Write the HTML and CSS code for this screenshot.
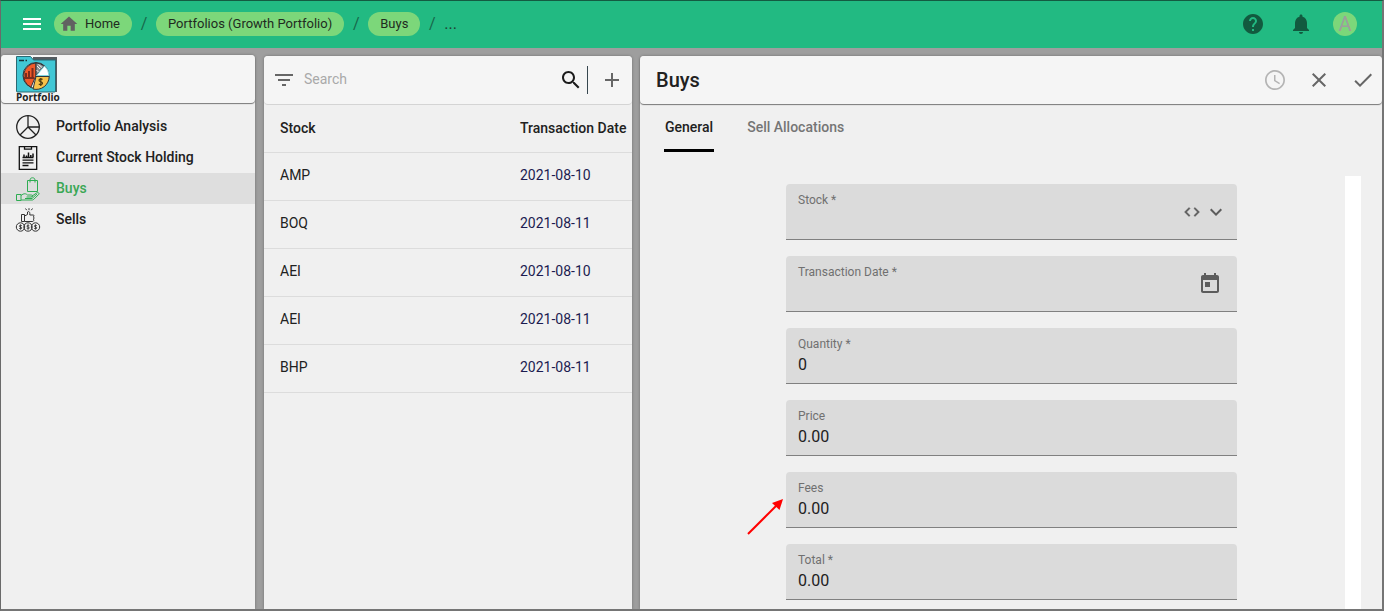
FILE: index.html
```
<!DOCTYPE html>
<html lang="en">
<head>
<meta charset="utf-8">
<title>Buys</title>
<link rel="stylesheet" href="styles.css">
</head>
<body>
<div class="app">
  <header class="topbar">
    <button class="icon-btn menu-btn" aria-label="Menu">
      <svg width="24" height="24" viewBox="0 0 24 24"><path fill="#fff" d="M3 18h18v-2H3v2zm0-5h18v-2H3v2zm0-7v2h18V6H3z"/></svg>
    </button>
    <nav class="crumbs" aria-label="Breadcrumb">
      <a class="chip chip-home" href="#"><svg width="20" height="20" viewBox="0 0 24 24"><path fill="#616161" d="M10 20v-6h4v6h5v-8h3L12 3 2 12h3v8z"/></svg>Home</a>
      <span class="slash">/</span>
      <a class="chip" href="#">Portfolios (Growth Portfolio)</a>
      <span class="slash">/</span>
      <a class="chip" href="#">Buys</a>
      <span class="slash">/</span>
      <span class="more">...</span>
    </nav>
    <div class="top-actions">
      <button class="icon-btn" aria-label="Help"><svg width="24" height="24" viewBox="0 0 24 24"><path fill="#125a3f" d="M12 2C6.48 2 2 6.48 2 12s4.48 10 10 10 10-4.48 10-10S17.52 2 12 2zm1 17h-2v-2h2v2zm2.07-7.75-.9.92C13.45 12.9 13 13.5 13 15h-2v-.5c0-1.1.45-2.1 1.17-2.83l1.24-1.26c.37-.36.59-.86.59-1.41 0-1.1-.9-2-2-2s-2 .9-2 2H8c0-2.21 1.79-4 4-4s4 1.79 4 4c0 .88-.36 1.68-.93 2.25z"/></svg></button>
      <button class="icon-btn" aria-label="Notifications"><svg width="24" height="24" viewBox="0 0 24 24"><path fill="#125a3f" d="M12 22c1.1 0 2-.9 2-2h-4c0 1.1.89 2 2 2zm6-6v-5c0-3.07-1.64-5.64-4.5-6.32V4c0-.83-.67-1.500-1.500-1.500s-1.500.67-1.500 1.500v.68C7.630 5.360 6 7.920 6 11v5l-2 2v1h16v-1l-2-2z"/></svg></button>
      <button class="avatar" aria-label="Account">A</button>
    </div>
  </header>

  <main class="columns">
    <aside class="panel sidebar">
      <div class="panel-head logo-head">
        <a class="logo" href="#">
          <svg width="41" height="37" viewBox="0 0 41 37">
            <path fill="#545b60" d="M17 1h24v35H17z"/>
            <path fill="#41c7d5" stroke="#2b6a74" d="M.5 35V.5h14l3 3.500h22V35a1 1 0 0 1-1 1h-37a1 1 0 0 1-1-1z"/>
            <path stroke="#17343a" stroke-width="1.500" d="M3 4.500h5M9.500 4.500h1.500"/>
            <circle cx="20" cy="19.500" r="13" fill="#f4f6f6" stroke="#30353a"/>
            <path fill="#f05a2a" stroke="#30353a" d="M20 19.500V7a12.700 12.700 0 0 0-5 24.200z"/>
            <path fill="#8d8f92" stroke="#30353a" d="M20 19.500V7a12.500 12.500 0 0 1 8 3z"/>
            <path stroke="#eee" d="M21 10l3 3M22.500 8.500l3.500 3M20.500 14l2 2"/>
            <path fill="#fff" stroke="#7fd5dd" d="M20.500 19.500 28.500 10a13 13 0 0 1 4.500 9.500z"/>
            <path fill="#f7c14a" stroke="#30353a" d="M20 20.500h13.200A13 13 0 0 1 17 33z"/>
            <path fill="none" stroke="#7c2b1d" stroke-width="2" d="M10 21v-4M13 21v-6M16.500 21v-9M8 22h10"/>
            <path fill="none" stroke="#4c3a10" stroke-width="1.200" d="M26.500 23.500c-1-1-3.500-.7-3.500.8 0 1.900 3.500 1 3.500 2.900 0 1.500-2.500 1.800-3.700.6M24.800 22v8"/>
          </svg>
          <span class="logo-text">Portfolio</span>
        </a>
      </div>
      <nav class="menu">
        <a class="menu-item" href="#"><svg width="24" height="24" viewBox="0 0 24 24" fill="none" stroke="#222" stroke-width="1.300"><circle cx="12" cy="12" r="11.300"/><path d="M12 .7V12h11.300M12 12l8 8M12 12l-8 8"/></svg><span>Portfolio Analysis</span></a>
        <a class="menu-item" href="#"><svg width="24" height="24" viewBox="0 0 24 24" fill="none" stroke="#111" stroke-width="1.300"><path d="M3.300.7h17.400v22.600H3.300zM8.500.7v2.500h7V.7" /><path d="M6.500 11.500h11M6.500 14.200h11M6.500 16.800h11M6.500 19.500h6"/><path stroke-width="1.500" d="M8 11V8.500M10.500 11V9.500M12.500 11V6.500M14.800 11V9M17 11V7.500"/></svg><span>Current Stock Holding</span></a>
        <a class="menu-item active" href="#"><svg width="24" height="24" viewBox="0 0 24 24" fill="none" stroke="#2eac52"><path d="M11.500 3.500h10v11h-10zM14 5.500V3c0-3 5-3 5 0v2.500M.5 17.500h4.500v6H.5zM5 18.500c3-2.500 5-2 6.500-.5h4c1.500 0 1.500 2 0 2h-5M15.500 19.500l5-3.500c2-1 3 .2 2.300 1.300l-5 5-1.300.7H5M9 21.500h7l5-4.500"/></svg><span>Buys</span></a>
        <a class="menu-item" href="#"><svg width="24" height="24" viewBox="0 0 24 24" fill="none" stroke="#333"><path d="M5.500 6.500h3v7h-3zM8.500 8l3-1.500V4c1.500-1 2.300 0 2.300 1.500v1.500h3.500c1 0 .9 1.500 0 1.500.9 0 .9 1.500 0 1.500.9 0 .9 1.500 0 1.500.9 0 .5 2-.5 2H8.500M13 .2v2M9.500.5l1.200 1.700M16.500.5l-1.200 1.700"/><circle cx="4.500" cy="19" r="4.200"/><circle cx="12" cy="19" r="4.200"/><circle cx="19.500" cy="19" r="4.200"/><path stroke-width=".9" d="M5.800 17.700c-1-.9-2.400-.5-2.400.4 0 1.300 2.400.6 2.400 1.800 0 1.100-1.600 1.200-2.600.4M4.500 16.500v5M13.300 17.700c-1-.9-2.400-.5-2.400.4 0 1.300 2.400.6 2.400 1.800 0 1.100-1.600 1.200-2.600.4M12 16.500v5M20.800 17.700c-1-.9-2.400-.5-2.400.4 0 1.300 2.400.6 2.400 1.800 0 1.100-1.600 1.200-2.600.4M19.500 16.500v5"/></svg><span>Sells</span></a>
      </nav>
    </aside>

    <section class="panel list">
      <div class="panel-head search-head">
        <button class="icon-btn" aria-label="Filter"><svg width="24" height="24" viewBox="0 0 24 24"><path fill="#666" d="M10 18h4v-2h-4v2zM3 6v2h18V6H3zm3 7h12v-2H6v2z"/></svg></button>
        <input class="search" type="search" placeholder="Search" aria-label="Search">
        <button class="icon-btn" aria-label="Run search"><svg width="24" height="24" viewBox="0 0 24 24"><path fill="#1c1c1c" d="M15.500 14h-.79l-.28-.27C15.410 12.590 16 11.110 16 9.500 16 5.910 13.090 3 9.500 3S3 5.910 3 9.500 5.910 16 9.500 16c1.610 0 3.090-.59 4.230-1.570l.27.28v.79l5 4.990L20.490 19l-4.990-5zm-6 0C7.010 14 5 11.990 5 9.500S7.010 5 9.500 5 14 7.010 14 9.500 11.990 14 9.500 14z"/></svg></button>
        <span class="divider"></span>
        <button class="icon-btn" aria-label="Add"><svg width="24" height="24" viewBox="0 0 24 24"><path fill="#666" d="M19 13h-6v6h-2v-6H5v-2h6V5h2v6h6v2z"/></svg></button>
      </div>
      <table class="grid">
        <thead><tr><th class="col-stock">Stock</th><th>Transaction Date</th></tr></thead>
        <tbody>
          <tr><td>AMP</td><td class="date">2021-08-10</td></tr>
          <tr><td>BOQ</td><td class="date">2021-08-11</td></tr>
          <tr><td>AEI</td><td class="date">2021-08-10</td></tr>
          <tr><td>AEI</td><td class="date">2021-08-11</td></tr>
          <tr><td>BHP</td><td class="date">2021-08-11</td></tr>
        </tbody>
      </table>
    </section>

    <section class="panel detail">
      <div class="panel-head detail-head">
        <h1 class="title">Buys</h1>
        <div class="detail-actions">
          <button class="icon-btn" aria-label="History" disabled><svg width="24" height="24" viewBox="0 0 24 24"><path fill="#b4b4b4" d="M11.990 2C6.470 2 2 6.480 2 12s4.470 10 9.990 10C17.520 22 22 17.520 22 12S17.520 2 11.990 2zM12 20.300c-4.600 0-8.300-3.700-8.300-8.300S7.400 3.700 12 3.700s8.300 3.700 8.300 8.300-3.700 8.300-8.300 8.300zM12.500 7H11v6l5.250 3.150.75-1.230-4.500-2.670z"/></svg></button>
          <button class="icon-btn" aria-label="Close"><svg width="24" height="24" viewBox="0 0 24 24"><path fill="#666" d="M19 6.410 17.590 5 12 10.590 6.410 5 5 6.410 10.590 12 5 17.590 6.410 19 12 13.410 17.590 19 19 17.590 13.410 12z"/></svg></button>
          <button class="icon-btn" aria-label="Save"><svg width="24" height="24" viewBox="0 0 24 24"><path fill="#666" d="M9 16.170 4.830 12l-1.420 1.410L9 19 21 7l-1.410-1.410z"/></svg></button>
        </div>
      </div>
      <div class="tabs" role="tablist">
        <button class="tab selected" role="tab" aria-selected="true">General</button>
        <button class="tab" role="tab" aria-selected="false">Sell Allocations</button>
      </div>
      <div class="scroller">
        <form class="form">
          <div class="field">
            <label for="stock">Stock *</label>
            <select id="stock"><option></option></select>
            <div class="field-icons">
              <button class="icon-btn" type="button" aria-label="Code"><svg width="18" height="18" viewBox="0 0 24 24"><path fill="#5c5c5c" d="M9.400 16.600 4.800 12l4.600-4.600L8 6l-6 6 6 6 1.400-1.400zm5.200 0 4.600-4.600-4.600-4.600L16 6l6 6-6 6-1.400-1.400z" stroke="#5c5c5c" stroke-width=".6"/></svg></button>
              <svg width="24" height="24" viewBox="0 0 24 24"><path fill="#5c5c5c" d="M7.410 8.590 12 13.170l4.590-4.580L18 10l-6 6-6-6z"/></svg>
            </div>
          </div>
          <div class="field">
            <label for="date">Transaction Date *</label>
            <input id="date" type="text">
            <div class="field-icons date-icon">
              <button class="icon-btn" type="button" aria-label="Open calendar"><svg width="24" height="24" viewBox="0 0 24 24"><path fill="#5c5c5c" d="M19 3h-1V1h-2v2H8V1H6v2H5c-1.110 0-1.990.9-1.990 2L3 19c0 1.100.89 2 2 2h14c1.100 0 2-.9 2-2V5c0-1.100-.9-2-2-2zm0 16H5V8h14v11zM7 10h5v5H7z"/></svg></button>
            </div>
          </div>
          <div class="field"><label for="qty">Quantity *</label><input id="qty" type="text" value="0"></div>
          <div class="field"><label for="price">Price</label><input id="price" type="text" value="0.00"></div>
          <div class="field">
            <label for="fees">Fees</label><input id="fees" type="text" value="0.00">
            <svg class="pointer" width="38" height="38" viewBox="0 0 38 38"><path stroke="#f00" stroke-width="2" d="M1 37 30 8"/><path fill="#f00" d="M36 2l-3.500 11-7.500-7z"/></svg>
          </div>
          <div class="field"><label for="total">Total *</label><input id="total" type="text" value="0.00"></div>
        </form>
        <div class="track"></div>
      </div>
    </section>
  </main>
</div>
</body>
</html>
```
FILE: styles.css
```
* { box-sizing: border-box; }

body {
  margin: 0;
  font: 14px/20px Roboto, "Open Sans", sans-serif;
  color: #212121;
}

button, input, select { font: inherit; color: inherit; }

svg { display: block; flex: none; overflow: visible; }

.app {
  height: 100vh;
  display: flex;
  flex-direction: column;
  overflow: hidden;
  background: #9e9e9e;
  border-style: solid;
  border-width: 1px 2px 2px 1px;
  border-color: #145b41 #757575 #757575 #6a6a6a;
}

.icon-btn {
  display: flex;
  padding: 0;
  border: 0;
  background: none;
}

/* Top bar */
.topbar {
  flex: none;
  height: 47px;
  display: flex;
  align-items: center;
  padding: 0 25px 1px 19px;
  background: #22ba82;
}

.crumbs { display: flex; align-items: center; margin-left: 10px; }

.chip {
  display: flex;
  align-items: center;
  height: 24px;
  padding: 0 12px;
  border-radius: 12px;
  background: #7cd77a;
  color: #1f2b1f;
  font-size: 13px;
  text-decoration: none;
}
.chip-home { gap: 6px; padding-left: 5px; }

.slash { width: 24px; text-align: center; color: #17684a; font-size: 16px; }
.more { color: #1f4033; font-size: 16px; }

.top-actions { display: flex; align-items: center; gap: 24px; margin-left: auto; }
.avatar {
  width: 24px;
  height: 24px;
  margin-left: -4px;
  padding: 0;
  border: 0;
  border-radius: 50%;
  background: #7cd77a;
  color: #9e9e9e;
  font-size: 20px;
  line-height: 24px;
}

/* Columns */
.columns {
  flex: 1;
  min-height: 0;
  display: flex;
  gap: 8px;
  padding-top: 8px;
}
.panel {
  display: flex;
  flex-direction: column;
  min-height: 0;
  border-radius: 4px 4px 0 0;
  background: #f0f0f0;
  box-shadow: 0 0 3px rgba(0, 0, 0, .3);
}
.panel-head {
  flex: none;
  height: 48px;
  display: flex;
  align-items: center;
  border-radius: 4px;
  background: #f5f5f5;
  box-shadow: 0 1px 1px rgba(0, 0, 0, .5);
}

/* Sidebar */
.sidebar { flex: none; width: 254px; margin: -1px 1px 0 0; }
.logo-head { padding-left: 15px; }
.logo { display: flex; flex-direction: column; color: #222; text-decoration: none; }
.logo-text { font: bold 10px/9px "Open Sans", sans-serif; }
.menu { padding-top: 8px; }
.menu-item {
  display: flex;
  align-items: center;
  gap: 16px;
  height: 31px;
  padding-left: 15px;
  color: #212121;
  font-weight: 500;
  text-decoration: none;
}
.menu-item span { padding-bottom: 2px; }
.menu-item.active { background: #dedede; color: #3aa755; }

/* List */
.list { flex: none; width: 368px; }
.search-head { padding: 0 8px; box-shadow: 0 1px 0 #d4d4d4; }
.search {
  flex: 1;
  min-width: 0;
  padding: 0 8px 2px;
  border: 0;
  outline: 0;
  background: none;
}
.search::placeholder { color: #a9a9a9; }
.divider { width: 1px; height: 28px; margin: 0 12px 0 4px; background: #37474f; }
.grid { width: 100%; border-collapse: collapse; }
.grid th, .grid td {
  height: 48px;
  padding: 0 0 2px 16px;
  border-bottom: 1px solid #dcdcdc;
  text-align: left;
  white-space: nowrap;
}
.grid th { font-weight: 500; padding-bottom: 0; }
.col-stock { width: 240px; }
.date { color: #1c1c50; }

/* Detail */
.detail { flex: 1; min-width: 0; }
.detail-head { padding: 0 7px 0 16px; }
.title { margin: 0; font-size: 20px; line-height: 24px; font-weight: 500; }
.detail-actions { display: flex; gap: 20px; margin-left: auto; }

.tabs { flex: none; display: flex; gap: 32px; height: 48px; padding: 0 24px; }
.tab {
  padding: 0 1px 2px;
  border: 0;
  background: none;
  color: #757575;
  font-weight: 500;
}
.tab.selected {
  padding-top: 3px;
  border-bottom: 3px solid #000;
  border-radius: 2px 2px 0 0;
  color: #212121;
}

.scroller { flex: 1; min-height: 0; display: flex; margin: 24px 21px 0 0; overflow: hidden; }
.track { flex: none; width: 16px; background: #fff; }
.form {
  flex: 1;
  display: flex;
  flex-direction: column;
  gap: 16px;
  padding: 8px 108px 9px 146px;
}
.field {
  flex: none;
  position: relative;
  display: flex;
  flex-direction: column;
  height: 56px;
  padding: 8px 12px 0;
  border-bottom: 1px solid #808080;
  border-radius: 4px 4px 0 0;
  background: #dbdbdb;
}
.field label { color: #707070; font-size: 12px; line-height: 16px; }
.field input, .field select {
  height: 24px;
  padding: 0;
  border: 0;
  outline: 0;
  background: none;
  appearance: none;
  font-size: 16px;
}
.field-icons {
  position: absolute;
  top: 16px;
  right: 9px;
  display: flex;
  align-items: center;
  gap: 3px;
}
.date-icon { right: 15px; }
.pointer { position: absolute; top: 25px; left: -39px; }
```
